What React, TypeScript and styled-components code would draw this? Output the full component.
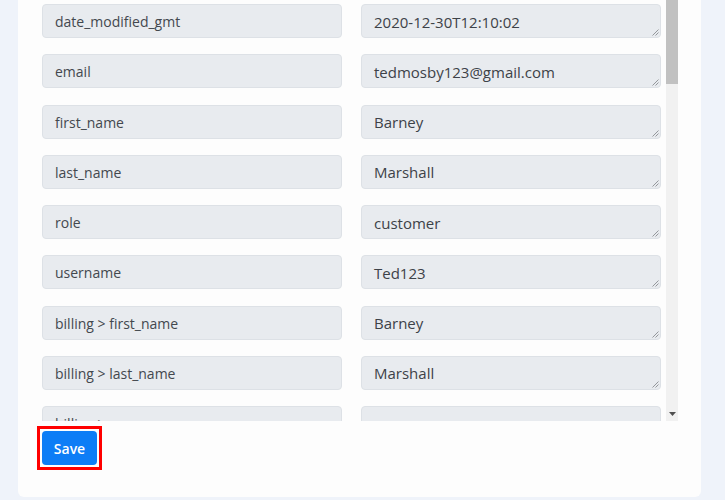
import React from "react";
import styled, { createGlobalStyle } from "styled-components";

const GlobalStyle = createGlobalStyle`
  html, body {
    margin: 0;
    padding: 0;
    background: #eff3fa;
    font-family: "Open Sans", "Noto Sans", Arial, sans-serif;
    overflow: hidden;
  }
  * { box-sizing: border-box; }
`;

const Page = styled.div`
  width: 725px;
  height: 500px;
  padding: 0 24px 0 18px;
`;

const Card = styled.div`
  background: #fdfdfd;
  border-radius: 0 0 6px 6px;
  padding: 0 23px 26px 19px;
  display: flex;
  flex-direction: column;
  gap: 5px;
  height: 497px;
`;

const ScrollRow = styled.div`
  display: flex;
  height: 421px;
  margin-left: 5px;
`;

const Viewport = styled.div`
  flex: 1;
  overflow: hidden;
  padding: 4px 5px 0 0;
`;

const FieldGrid = styled.div`
  display: grid;
  grid-template-columns: 300px 300px;
  column-gap: 19px;
  row-gap: 16.25px;
`;

const Label = styled.div`
  height: 34px;
  display: flex;
  align-items: center;
  padding: 1px 12px 0;
  background: #e8ebef;
  border: 1px solid #dde1e6;
  border-radius: 4px;
  font-size: 14px;
  color: #43484e;
  white-space: nowrap;
  overflow: hidden;
`;

const ValueBox = styled.div`
  position: relative;
  height: 34px;
  display: flex;
  align-items: center;
  padding: 1px 12px 0;
  background: #e8ebef;
  border: 1px solid #dde1e6;
  border-radius: 4px;
  font-size: 15px;
  color: #3d4248;
  white-space: nowrap;
  overflow: hidden;
`;

const Grip = styled.svg`
  position: absolute;
  right: 1px;
  bottom: 1px;
  width: 8px;
  height: 8px;
`;

const Track = styled.div`
  width: 12px;
  background: #f1f1f1;
  display: flex;
  flex-direction: column;
`;

const Thumb = styled.div`
  height: 84px;
  background: #c1c1c1;
`;

const TrackSpace = styled.div`
  flex: 1;
`;

const ArrowButton = styled.div`
  height: 14px;
  display: flex;
  align-items: center;
  justify-content: center;
`;

const Footer = styled.div`
  display: flex;
`;

const Highlight = styled.div`
  border: 3px solid #ff0000;
  padding: 2px;
  display: flex;
`;

const SaveButton = styled.button`
  width: 55px;
  height: 34px;
  background: #0d7df6;
  color: #ffffff;
  border: none;
  border-radius: 4px;
  font-family: "Open Sans", "Noto Sans", Arial, sans-serif;
  font-size: 14px;
  font-weight: 600;
  padding: 0;
  cursor: pointer;
`;

const rows: [string, string][] = [
  ["date_modified_gmt", "2020-12-30T12:10:02"],
  ["email", "tedmosby123@gmail.com"],
  ["first_name", "Barney"],
  ["last_name", "Marshall"],
  ["role", "customer"],
  ["username", "Ted123"],
  ["billing > first_name", "Barney"],
  ["billing > last_name", "Marshall"],
  ["billing > company", ""],
];

const ResizeGrip = () => (
  <Grip viewBox="0 0 8 8">
    <path d="M7.5 1.5 L1.5 7.5 M7.5 4.5 L4.5 7.5" stroke="#8a8d91" strokeWidth="0.9" fill="none" />
  </Grip>
);

export default function App() {
  return (
    <>
      <GlobalStyle />
      <Page>
        <Card>
          <ScrollRow>
            <Viewport>
              <FieldGrid>
                {rows.map(([k, v]) => (
                  <React.Fragment key={k}>
                    <Label>{k}</Label>
                    <ValueBox>
                      {v}
                      <ResizeGrip />
                    </ValueBox>
                  </React.Fragment>
                ))}
              </FieldGrid>
            </Viewport>
            <Track>
              <Thumb />
              <TrackSpace />
              <ArrowButton>
                <svg width="7" height="4" viewBox="0 0 7 4">
                  <path d="M0 0 H7 L3.5 4 Z" fill="#505050" />
                </svg>
              </ArrowButton>
            </Track>
          </ScrollRow>
          <Footer>
            <Highlight>
              <SaveButton>Save</SaveButton>
            </Highlight>
          </Footer>
        </Card>
      </Page>
    </>
  );
}
